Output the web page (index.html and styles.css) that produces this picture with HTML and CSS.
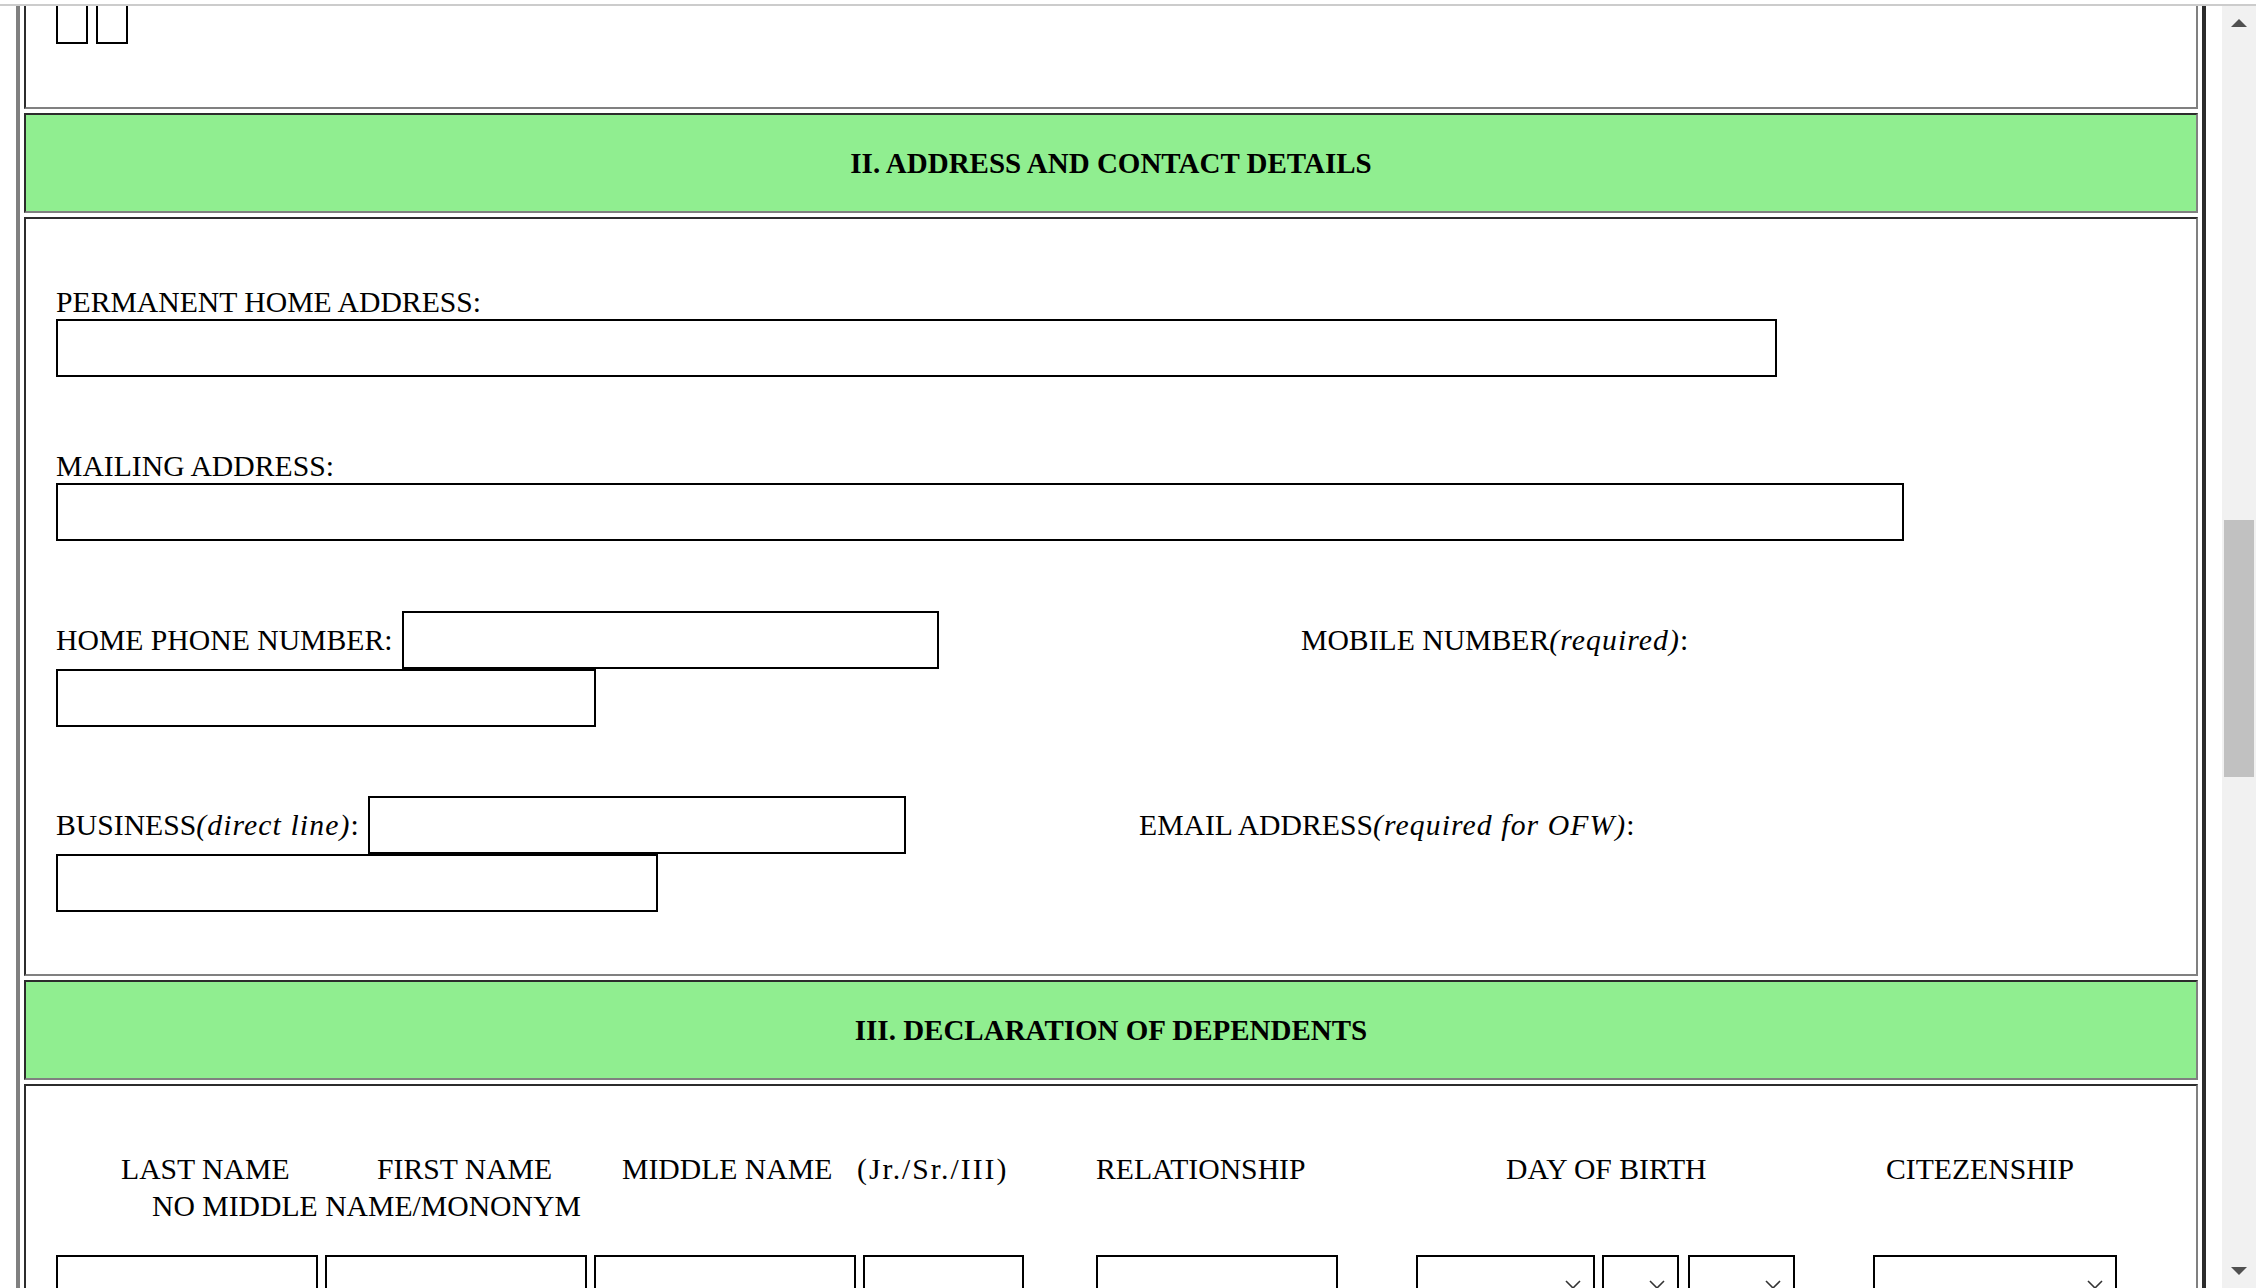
FILE: index.html
```html
<!DOCTYPE html>
<html lang="en">
<head>
<meta charset="utf-8">
<title>Member Data Form</title>
<link rel="stylesheet" href="styles.css">
</head>
<body>
<div class="topbar"></div>
<div class="viewport">
  <main class="main">
    <div class="frame">
      <section class="cell sec1">
        <div class="charboxes"><span class="charbox"></span><span class="charbox"></span></div>
      </section>

      <div class="cell band"><h2>II. ADDRESS AND CONTACT DETAILS</h2></div>

      <section class="cell sec2">
        <div class="field">
          <label class="lbl">PERMANENT HOME ADDRESS:</label>
          <input type="text" class="box w-perm">
        </div>
        <div class="field mt72">
          <label class="lbl">MAILING ADDRESS:</label>
          <input type="text" class="box w-mail">
        </div>

        <div class="row mt70">
          <label class="lbl lbl-home">HOME PHONE NUMBER:</label>
          <input type="text" class="box w537">
          <label class="lbl lbl-mobile">MOBILE NUMBER<i>(required)</i>:</label>
        </div>
        <div class="row">
          <input type="text" class="box w540">
        </div>

        <div class="row mt69">
          <label class="lbl lbl-biz">BUSINESS<i>(direct line)</i>:</label>
          <input type="text" class="box w538">
          <label class="lbl lbl-email">EMAIL ADDRESS<i>(required for OFW)</i>:</label>
        </div>
        <div class="row">
          <input type="text" class="box w602">
        </div>
      </section>

      <div class="cell band"><h2>III. DECLARATION OF DEPENDENTS</h2></div>

      <section class="cell sec3">
        <div class="dep-head">
          <span>LAST NAME</span>
          <span>FIRST NAME</span>
          <span>MIDDLE NAME</span>
          <span class="jr">(Jr./Sr./III)</span>
          <span>RELATIONSHIP</span>
          <span>DAY OF BIRTH</span>
          <span>CITEZENSHIP</span>
        </div>
        <div class="dep-sub">NO MIDDLE NAME/MONONYM</div>
        <div class="dep-inputs">
          <input type="text" class="box w262">
          <input type="text" class="box w262 ml7">
          <input type="text" class="box w262 ml7">
          <input type="text" class="box w161 ml7">
          <input type="text" class="box w242 ml72">
          <div class="box sel w179 ml78"><svg class="chev" width="16" height="9" viewBox="0 0 16 9"><polyline points="1,1 8,8 15,1"/></svg></div>
          <div class="box sel w77 ml7"><svg class="chev" width="16" height="9" viewBox="0 0 16 9"><polyline points="1,1 8,8 15,1"/></svg></div>
          <div class="box sel w107 ml9"><svg class="chev" width="16" height="9" viewBox="0 0 16 9"><polyline points="1,1 8,8 15,1"/></svg></div>
          <div class="box sel w244 ml78"><svg class="chev" width="16" height="9" viewBox="0 0 16 9"><polyline points="1,1 8,8 15,1"/></svg></div>
        </div>
      </section>
    </div>
  </main>

  <aside class="scrollbar">
    <div class="sb-btn"><svg width="16" height="8" viewBox="0 0 16 8"><polygon points="8,0 16,8 0,8"/></svg></div>
    <div class="sb-track"><div class="sb-thumb"></div></div>
    <div class="sb-btn"><svg width="16" height="8" viewBox="0 0 16 8"><polygon points="0,0 16,0 8,8"/></svg></div>
  </aside>
</div>
</body>
</html>
```

FILE: styles.css
```css
html, body {
  margin: 0;
  padding: 0;
  background: #fff;
}

body {
  font-family: "Liberation Serif", "Times New Roman", serif;
  font-size: 29.7px;
  color: #000;
  height: 1288px;
  overflow: hidden;
}

.topbar {
  position: fixed;
  top: 0;
  left: 0;
  right: 0;
  height: 4px;
  background: #fff;
  border-bottom: 2px solid #cccccc;
  z-index: 10;
}

.viewport {
  display: flex;
  height: 1288px;
  overflow: hidden;
}

.main {
  flex: 1;
  padding: 0 16px;
  overflow: hidden;
}

.frame {
  margin-top: -95px;
  border-left: 4px solid #808080;
  border-right: 4px solid #2c2c2c;
  padding: 4px;
  display: flex;
  flex-direction: column;
  gap: 4px;
}

.cell {
  border: 2px solid;
  border-color: #2c2c2c #808080 #808080 #2c2c2c;
}

/* section I remnant */
.sec1 {
  height: 200px;
  box-sizing: border-box;
  display: flex;
  align-items: flex-end;
  padding: 0 0 63px 30px;
}

.charboxes {
  display: flex;
  gap: 8px;
}

.charbox {
  width: 32px;
  height: 58px;
  box-sizing: border-box;
  border: 2px solid #000;
}

/* green section bands */
.band {
  background: #90ee90;
  height: 100px;
  box-sizing: border-box;
  display: flex;
  align-items: center;
  justify-content: center;
}

.band h2 {
  margin: 0;
  font-size: 29px;
  font-weight: bold;
  line-height: 34px;
}

/* section II */
.sec2 {
  padding: 66px 0 62px 30px;
}

.lbl {
  display: block;
  line-height: 34px;
  white-space: nowrap;
}

.lbl i {
  font-style: italic;
  letter-spacing: 1.1px;
}

.box {
  display: block;
  flex: none;
  height: 58px;
  box-sizing: border-box;
  border: 2px solid #000;
  margin: 0;
  padding: 0;
  background: #fff;
  font: inherit;
  outline: none;
  border-radius: 0;
}

.row {
  display: flex;
  align-items: center;
}

.mt72 { margin-top: 72px; }
.mt70 { margin-top: 70px; }
.mt69 { margin-top: 69px; }

.lbl-home { width: 346px; flex: none; }
.lbl-biz { width: 312px; flex: none; }
.lbl-mobile { margin-left: 362px; }
.lbl-email { margin-left: 233px; }

.w-perm { width: 1721px; }
.w-mail { width: 1848px; }
.w537 { width: 537px; }
.w540 { width: 540px; }
.w538 { width: 538px; }
.w602 { width: 602px; }

/* section III */
.sec3 {
  padding: 65px 0 0 30px;
  height: 320px;
}

.dep-head {
  display: grid;
  grid-template-columns: 256px 245px 235px 239px 410px 380px auto;
  margin-left: 65px;
  line-height: 37px;
  white-space: nowrap;
}

.jr {
  letter-spacing: 2px;
}

.dep-sub {
  margin-left: 96px;
  line-height: 37px;
  white-space: nowrap;
}

.dep-inputs {
  display: flex;
  margin-top: 30px;
}

.w262 { width: 262px; }
.w161 { width: 161px; }
.w242 { width: 242px; }
.w179 { width: 179px; }
.w77 { width: 77px; }
.w107 { width: 107px; }
.w244 { width: 244px; }

.ml7 { margin-left: 7px; }
.ml9 { margin-left: 9px; }
.ml72 { margin-left: 72px; }
.ml78 { margin-left: 78px; }

.sel {
  display: flex;
  align-items: center;
  justify-content: flex-end;
  padding-right: 12px;
}

.chev polyline {
  fill: none;
  stroke: #333;
  stroke-width: 1.6;
}

/* fake scrollbar */
.scrollbar {
  width: 34px;
  flex: none;
  background: #f1f1f1;
  display: flex;
  flex-direction: column;
  padding-top: 6px;
  box-sizing: border-box;
}

.sb-btn {
  height: 34px;
  flex: none;
  display: flex;
  align-items: center;
  justify-content: center;
}

.sb-btn polygon {
  fill: #505050;
}

.sb-track {
  flex: 1;
  padding: 0 2px;
}

.sb-thumb {
  margin-top: 480px;
  height: 257px;
  background: #c1c1c1;
}
```
